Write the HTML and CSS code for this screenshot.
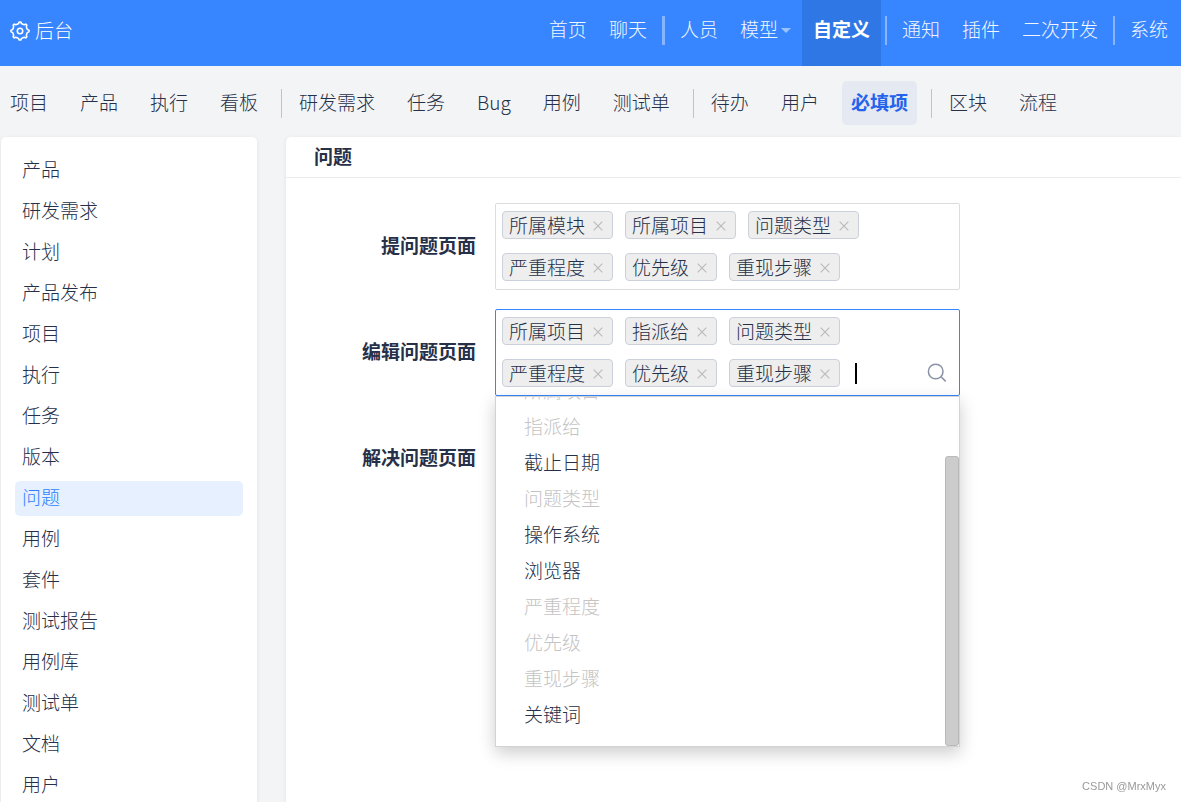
FILE: index.html
```html
<!DOCTYPE html>
<html lang="zh-CN">
<head>
<meta charset="utf-8">
<title>后台 - 必填项</title>
<link rel="stylesheet" href="styles.css">
</head>
<body>
<svg class="sprite" aria-hidden="true">
  <symbol id="close" viewBox="0 0 10 10"><path d="M.7.7l8.6 8.6M9.3.7L.7 9.3" fill="none" stroke="currentColor" stroke-width="1.2"/></symbol>
</svg>
<header class="topbar">
  <a class="brand" href="#">
    <svg class="brand-icon" viewBox="0 0 20 20" fill="none" stroke="currentColor" stroke-width="1.6" stroke-linejoin="round"><path d="M7.200 3.300Q8.900 2.800 9.200 1h1.600Q11.100 2.800 12.800 3.300 14.400 4.100 15.800 3.100L16.900 4.200Q15.900 5.600 16.700 7.200 17.200 8.900 19 9.200v1.600Q17.200 11.100 16.700 12.800 15.900 14.400 16.900 15.800L15.800 16.900Q14.400 15.900 12.800 16.700 11.100 17.200 10.800 19H9.200Q8.900 17.200 7.200 16.700 5.600 15.900 4.200 16.900L3.100 15.800Q4.100 14.400 3.300 12.800 2.800 11.100 1 10.800V9.200Q2.800 8.900 3.300 7.200 4.100 5.600 3.100 4.200L4.200 3.100Q5.600 4.100 7.200 3.300z"/><circle cx="10" cy="10" r="2.700"/></svg>
    <span>后台</span>
  </a>
  <nav class="mainnav">
    <a href="#">首页</a>
    <a href="#">聊天</a>
    <span class="bar bar-wide"></span>
    <a href="#">人员</a>
    <a href="#">模型<span class="caret"></span></a>
    <a class="active" href="#">自定义</a>
    <span class="bar"></span>
    <a href="#">通知</a>
    <a href="#">插件</a>
    <a href="#">二次开发</a>
    <span class="bar"></span>
    <a href="#">系统</a>
  </nav>
</header>
<nav class="subnav">
  <a href="#">项目</a>
  <a href="#">产品</a>
  <a href="#">执行</a>
  <a href="#">看板</a>
  <span class="line"></span>
  <a href="#">研发需求</a>
  <a href="#">任务</a>
  <a href="#">Bug</a>
  <a href="#">用例</a>
  <a href="#">测试单</a>
  <span class="line"></span>
  <a href="#">待办</a>
  <a href="#">用户</a>
  <a class="active" href="#">必填项</a>
  <span class="line"></span>
  <a href="#">区块</a>
  <a href="#">流程</a>
</nav>
<div class="layout">
  <aside class="sidebar">
    <a href="#">产品</a>
    <a href="#">研发需求</a>
    <a href="#">计划</a>
    <a href="#">产品发布</a>
    <a href="#">项目</a>
    <a href="#">执行</a>
    <a href="#">任务</a>
    <a href="#">版本</a>
    <a class="active" href="#">问题</a>
    <a href="#">用例</a>
    <a href="#">套件</a>
    <a href="#">测试报告</a>
    <a href="#">用例库</a>
    <a href="#">测试单</a>
    <a href="#">文档</a>
    <a href="#">用户</a>
  </aside>
  <main class="panel">
    <h1 class="panel-title">问题</h1>
    <form class="form">
      <div class="row">
        <span class="label" id="create-label">提问题页面</span>
        <div class="picker" role="group" aria-labelledby="create-label">
          <span class="tag">所属模块<button type="button" aria-label="移除所属模块"><svg><use href="#close"/></svg></button></span>
          <span class="tag">所属项目<button type="button" aria-label="移除所属项目"><svg><use href="#close"/></svg></button></span>
          <span class="tag">问题类型<button type="button" aria-label="移除问题类型"><svg><use href="#close"/></svg></button></span>
          <span class="tag">严重程度<button type="button" aria-label="移除严重程度"><svg><use href="#close"/></svg></button></span>
          <span class="tag">优先级<button type="button" aria-label="移除优先级"><svg><use href="#close"/></svg></button></span>
          <span class="tag">重现步骤<button type="button" aria-label="移除重现步骤"><svg><use href="#close"/></svg></button></span>
        </div>
      </div>
      <div class="row">
        <label class="label" for="edit-search">编辑问题页面</label>
        <div class="picker open">
          <span class="tag">所属项目<button type="button" aria-label="移除所属项目"><svg><use href="#close"/></svg></button></span>
          <span class="tag">指派给<button type="button" aria-label="移除指派给"><svg><use href="#close"/></svg></button></span>
          <span class="tag">问题类型<button type="button" aria-label="移除问题类型"><svg><use href="#close"/></svg></button></span>
          <span class="tag">严重程度<button type="button" aria-label="移除严重程度"><svg><use href="#close"/></svg></button></span>
          <span class="tag">优先级<button type="button" aria-label="移除优先级"><svg><use href="#close"/></svg></button></span>
          <span class="tag">重现步骤<button type="button" aria-label="移除重现步骤"><svg><use href="#close"/></svg></button></span>
          <span class="search">
            <span class="cursor"></span>
            <input id="edit-search" type="text" autocomplete="off">
            <svg class="search-icon" viewBox="0 0 20 20" fill="none" stroke="currentColor" stroke-width="1.500"><circle cx="8.700" cy="8.500" r="7.300"/><path d="M14 13.700l4.700 4.700"/></svg>
          </span>
          <div class="dropdown">
            <ul class="options" role="listbox" aria-label="编辑问题页面">
              <li class="chosen" role="option" aria-selected="true">所属项目</li>
              <li class="chosen" role="option" aria-selected="true">指派给</li>
              <li role="option">截止日期</li>
              <li class="chosen" role="option" aria-selected="true">问题类型</li>
              <li role="option">操作系统</li>
              <li role="option">浏览器</li>
              <li class="chosen" role="option" aria-selected="true">严重程度</li>
              <li class="chosen" role="option" aria-selected="true">优先级</li>
              <li class="chosen" role="option" aria-selected="true">重现步骤</li>
              <li role="option">关键词</li>
            </ul>
            <span class="thumb"></span>
          </div>
        </div>
      </div>
      <div class="row">
        <span class="label">解决问题页面</span>
      </div>
    </form>
  </main>
</div>
<p class="watermark">CSDN @MrxMyx</p>
</body>
</html>
```

FILE: styles.css
```css
* {
  box-sizing: border-box;
}

body {
  display: flex;
  flex-direction: column;
  height: 100vh;
  margin: 0;
  overflow: hidden;
  background: #f3f4f6;
  color: #263048;
  font: 300 19px/27px "Noto Sans CJK SC", sans-serif;
}

a {
  color: inherit;
  text-decoration: none;
  white-space: nowrap;
}

.sprite {
  display: none;
}

/* Top bar */
.topbar {
  display: flex;
  flex: none;
  justify-content: space-between;
  height: 66px;
  padding: 0 2px 0 10px;
  background: #3785ff;
  color: #fff;
}

.brand {
  display: flex;
  align-items: center;
  gap: 5px;
  padding-bottom: 8px;
}

.brand-icon {
  width: 20px;
  height: 20px;
  margin-top: 4px;
}

.mainnav {
  display: flex;
}

.mainnav a {
  display: flex;
  align-items: center;
  padding: 0 11px 10px;
  color: #f2f7ff;
}

.mainnav .active {
  background: #3077e6;
  color: #fff;
  font-weight: 700;
}

.bar {
  width: 2px;
  height: 29px;
  margin: 16px 4px 0;
  background: #87b6ff;
}

.bar-wide {
  width: 3px;
}

.caret {
  margin: 4px 0 0 3px;
  border: 5px solid transparent;
  border-top-color: #9bc2ff;
  border-bottom: 0;
}

/* Secondary navigation */
.subnav {
  display: flex;
  flex: none;
  align-items: center;
  gap: 14px;
  padding: 15px 1px 12px;
}

.subnav a {
  padding: 7px 9px 10px;
  border-radius: 5px;
}

.subnav .active {
  background: #e4e9f2;
  color: #2463eb;
  font-weight: 700;
}

.line {
  width: 1px;
  height: 29px;
  margin-right: -6px;
  background: #c1c3c7;
}

/* Page body */
.layout {
  display: flex;
  flex: 1;
  gap: 29px;
  min-height: 0;
  padding-left: 1px;
}

.sidebar {
  display: flex;
  flex: none;
  flex-direction: column;
  gap: 6px;
  width: 256px;
  padding: 16px 14px;
  border-radius: 5px 5px 0 0;
  background: #fff;
  box-shadow: 0 1px 4px rgba(0, 0, 0, .08);
}

.sidebar a {
  flex: none;
  padding: 2px 7px 6px;
  border-radius: 5px;
}

.sidebar .active {
  background: #e6f0ff;
  color: #2e7fff;
}

.panel {
  flex: 1;
  border-radius: 5px 0 0 0;
  background: #fff;
  box-shadow: 0 1px 4px rgba(0, 0, 0, .08);
}

.panel-title {
  margin: 0;
  padding: 5px 28px 8px;
  border-bottom: 1px solid #ebecee;
  font-size: 19px;
  font-weight: 700;
}

.form {
  display: grid;
  gap: 19px;
  padding-top: 25px;
}

.row {
  display: grid;
  grid-template-columns: 190px minmax(0, 465px);
  gap: 19px;
  align-items: center;
  min-height: 87px;
}

.label {
  padding-bottom: 4px;
  font-weight: 700;
  text-align: right;
}

/* Multiple select */
.picker {
  position: relative;
  display: flex;
  flex-wrap: wrap;
  gap: 14px 12px;
  padding: 7px 6px 8px;
  border: 1px solid #dcdcdf;
  border-radius: 2px;
}

.picker.open {
  border-color: #3785ff;
}

.tag {
  display: flex;
  align-items: center;
  height: 28px;
  padding: 0 9px 0 6px;
  border: 1px solid #cbd0db;
  border-radius: 4px;
  background: #eee;
  line-height: 24px;
  white-space: nowrap;
}

.tag button {
  display: block;
  margin-left: 8px;
  padding: 2px 0 0;
  border: 0;
  background: none;
  color: #bbb;
}

.tag svg {
  display: block;
  width: 10px;
  height: 10px;
}

.search {
  display: flex;
  flex: 1;
  align-items: center;
  min-width: 60px;
  height: 28px;
  padding: 0 6px 0 3px;
}

.cursor {
  width: 2px;
  height: 21px;
  background: #000;
}

.search input {
  flex: 1;
  min-width: 0;
  padding: 0;
  border: 0;
  outline: 0;
  background: none;
  font: inherit;
}

.search-icon {
  width: 20px;
  height: 20px;
  color: #8a92a3;
}

.dropdown {
  position: absolute;
  top: calc(100% + 1px);
  right: -1px;
  left: -1px;
  display: flex;
  flex-direction: column;
  justify-content: flex-end;
  height: 351px;
  overflow: hidden;
  border: 1px solid #d3d3d3;
  background: #fff;
  box-shadow: 0 6px 16px rgba(0, 0, 0, .2);
}

.options {
  flex: none;
  margin: 0;
  padding: 0 0 14px;
  list-style: none;
}

.options li {
  padding: 4px 28px 5px;
}

.options .chosen {
  color: #c4c4c4;
}

.thumb {
  position: absolute;
  right: 0;
  bottom: 0;
  width: 14px;
  height: 290px;
  border: 1px solid #b9b9b9;
  border-radius: 3px;
  background: #ccc;
}

.watermark {
  position: fixed;
  right: 15px;
  bottom: 8px;
  margin: 0;
  color: #999;
  font: 11px/16px "Liberation Sans", sans-serif;
}
```
